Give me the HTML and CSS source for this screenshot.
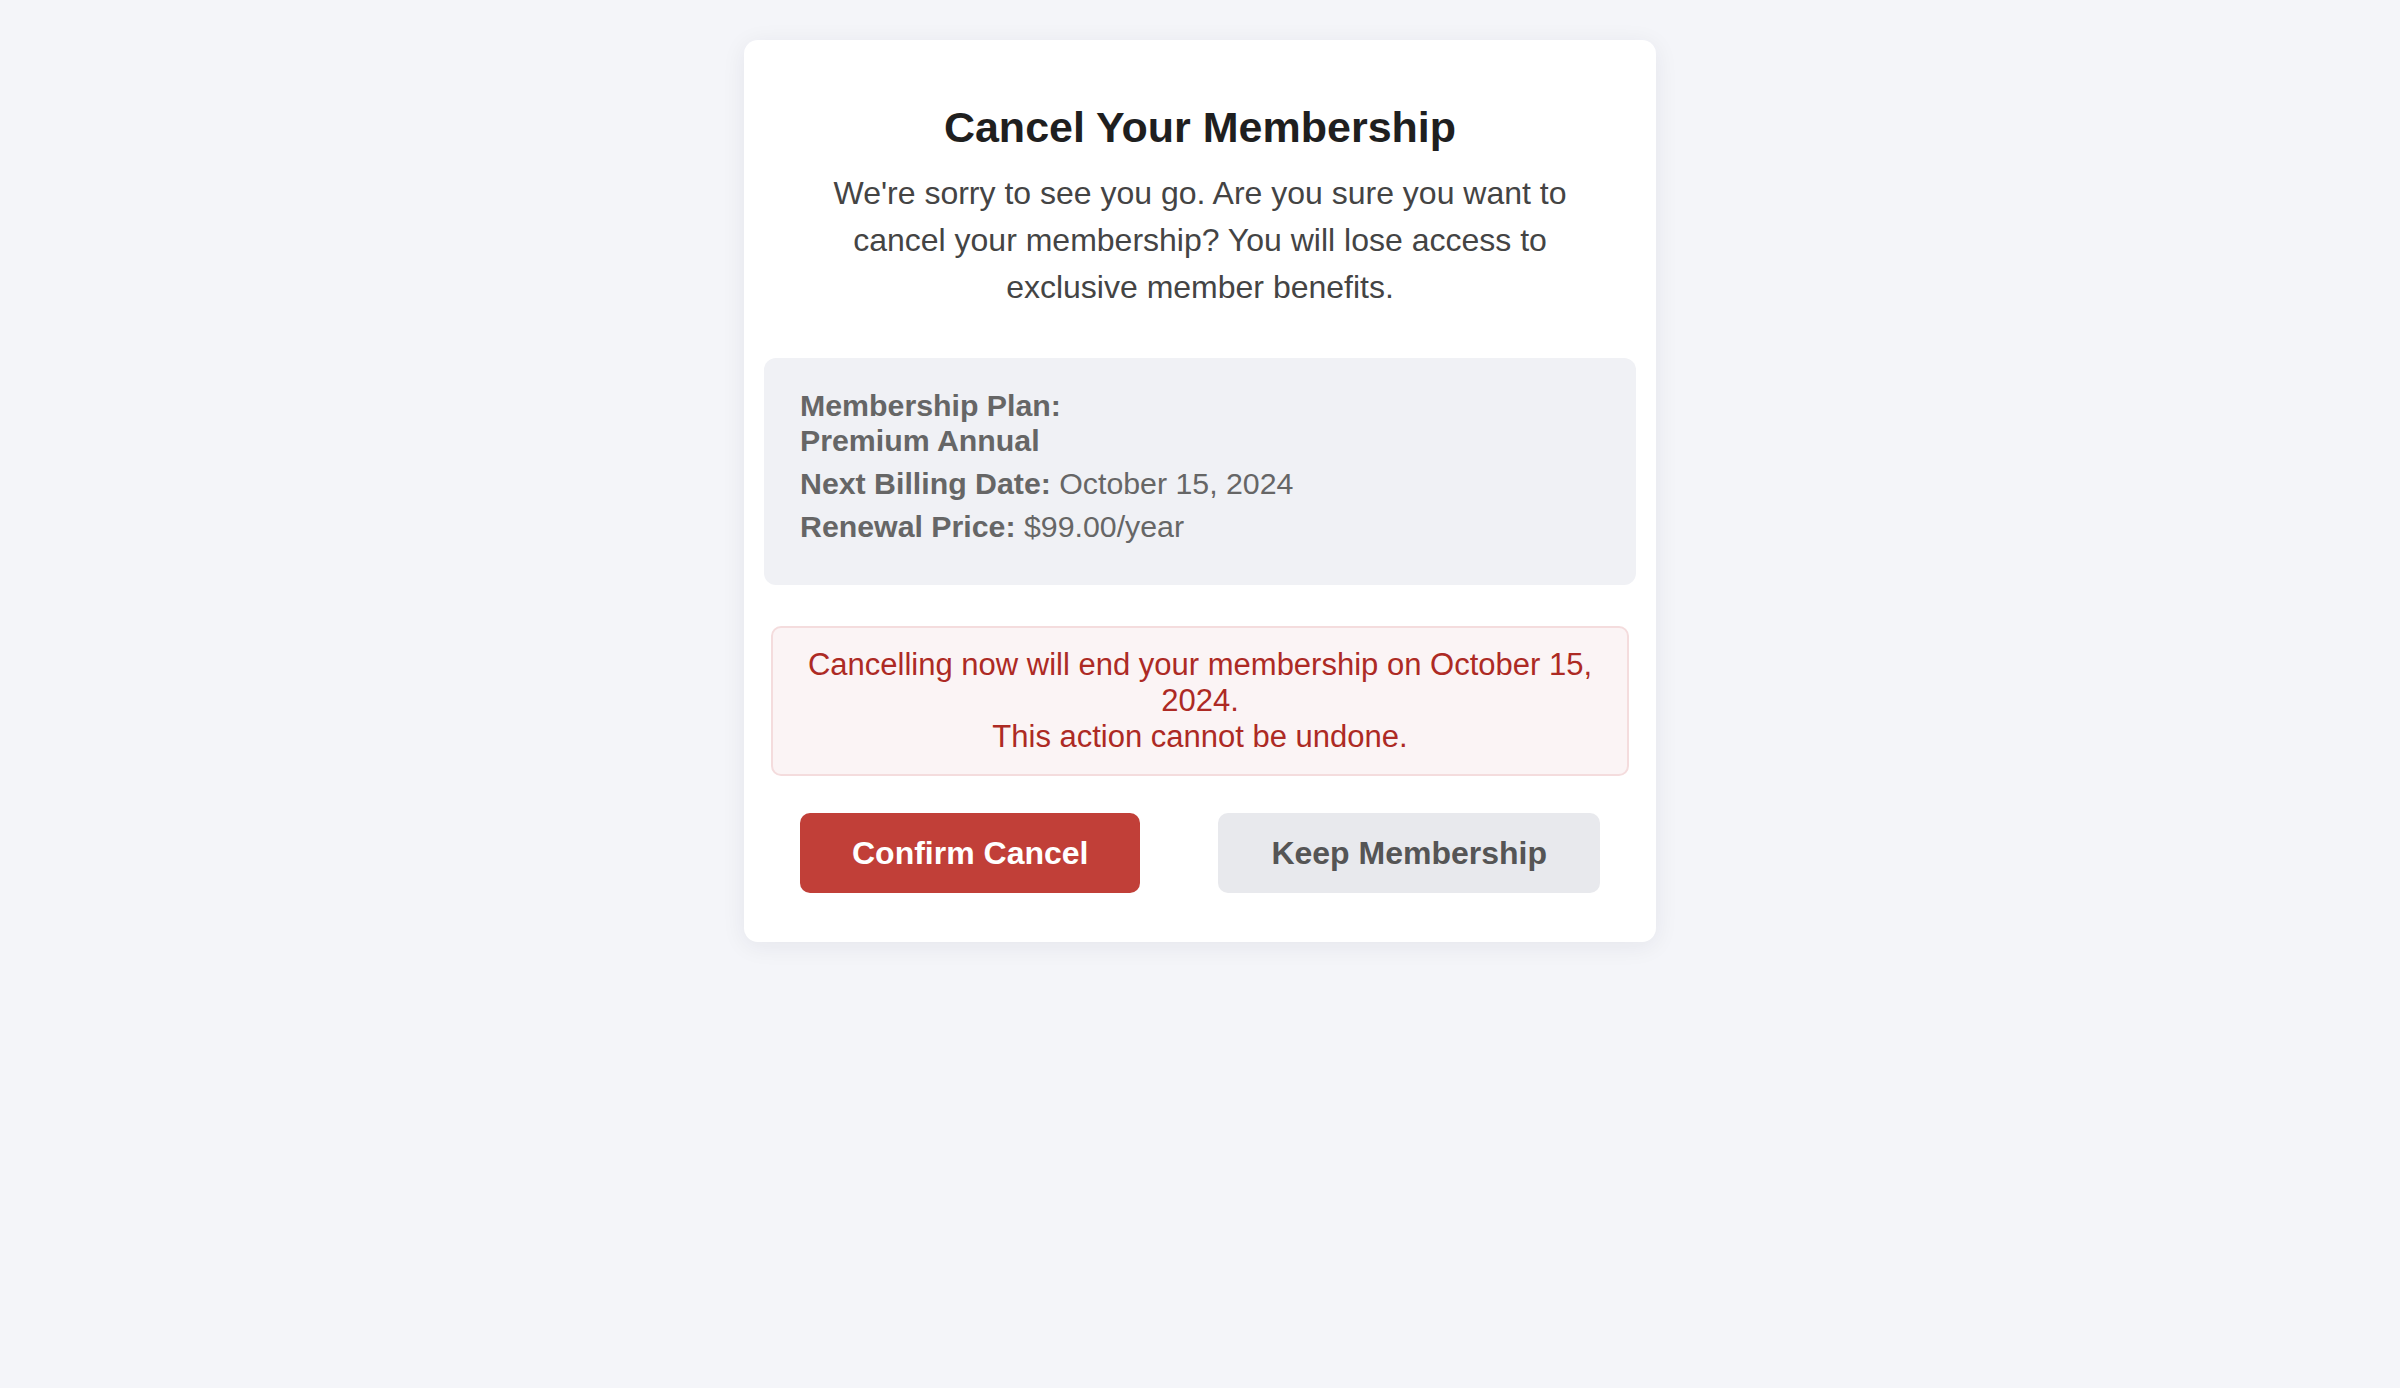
FILE: index.html
```html
<!DOCTYPE html>
<html lang="en">
<head>
<meta charset="utf-8">
<title>Cancel Your Membership</title>
<link rel="stylesheet" href="styles.css">
</head>
<body>
<main class="card">
  <h1 class="title">Cancel Your Membership</h1>
  <p class="intro">We're sorry to see you go. Are you sure you want to cancel your membership? You will lose access to exclusive member benefits.</p>
  <section class="details">
    <div class="row"><strong>Membership Plan:</strong><strong class="block">Premium Annual</strong></div>
    <div class="row"><strong>Next Billing Date:</strong> October 15, 2024</div>
    <div class="row"><strong>Renewal Price:</strong> $99.00/year</div>
  </section>
  <div class="warning">
    <p class="warning-line">Cancelling now will end your membership on October 15, 2024.</p>
    <p class="warning-line">This action cannot be undone.</p>
  </div>
  <div class="actions">
    <button class="btn btn-confirm" type="button">Confirm Cancel</button>
    <button class="btn btn-keep" type="button">Keep Membership</button>
  </div>
</main>
</body>
</html>
```
FILE: styles.css
```css
html, body {
  margin: 0;
  padding: 0;
}
body {
  background: #f4f5f9;
  font-family: "Liberation Sans", Arial, Helvetica, sans-serif;
  min-height: 1388px;
}
.card {
  box-sizing: border-box;
  width: 912px;
  margin: 40px auto 0;
  padding: 48px 20px 49px;
  background: #ffffff;
  border-radius: 14px;
  box-shadow: 0 4px 24px rgba(30, 35, 60, 0.07);
  display: flex;
  flex-direction: column;
}
.title {
  margin: 14px 0 0;
  font-size: 43px;
  line-height: 50px;
  font-weight: 700;
  color: #1f1f1f;
  text-align: center;
}
.intro {
  margin: 18px auto 0;
  max-width: 780px;
  font-size: 32px;
  line-height: 47px;
  color: #444444;
  text-align: center;
}
.details {
  margin-top: 47px;
  padding: 30px 36px 41px;
  background: #f0f1f5;
  border-radius: 12px;
  color: #666666;
  font-size: 30.3px;
  line-height: 35px;
  display: flex;
  flex-direction: column;
  gap: 8px;
}
.block {
  display: block;
}
.warning {
  margin: 41px 7px 0;
  padding: 19px 24px;
  background: #fbf4f5;
  border: 2px solid #f4dcdd;
  border-radius: 10px;
  color: #ad2a24;
  font-size: 31px;
  line-height: 36px;
  text-align: center;
}
.warning-line {
  margin: 0;
}
.actions {
  margin-top: 37px;
  padding: 0 36px;
  display: flex;
  justify-content: space-between;
}
.btn {
  font-family: "Liberation Sans", Arial, Helvetica, sans-serif;
  font-size: 32px;
  font-weight: 700;
  line-height: 38px;
  padding: 21px 52px;
  border: none;
  border-radius: 10px;
  cursor: pointer;
}
.btn-confirm {
  background: #c13f38;
  color: #ffffff;
}
.btn-keep {
  background: #e8e9ed;
  color: #555555;
  padding: 21px 53px;
}
```
